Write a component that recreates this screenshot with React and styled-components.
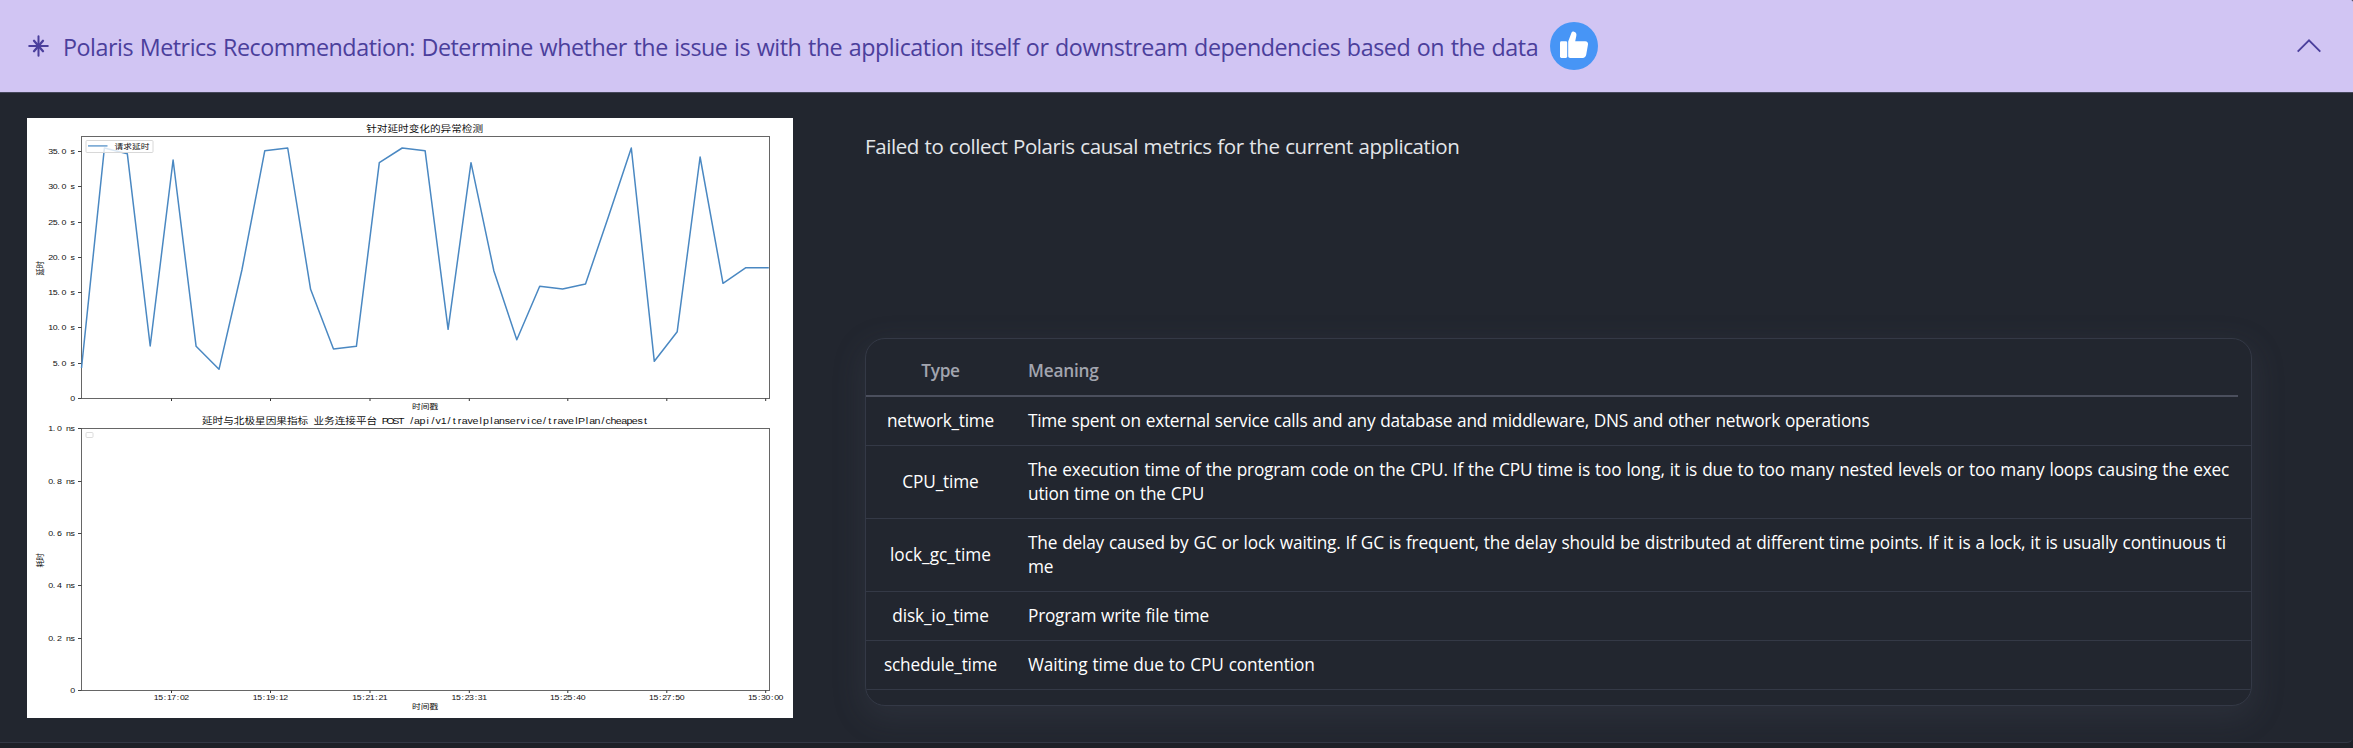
import React from 'react';
import styled, { createGlobalStyle } from 'styled-components';

const GlobalStyle = createGlobalStyle`
  *, *::before, *::after { box-sizing: border-box; }
  html, body { margin: 0; background: #1d2027; }
  body { font-family: "Open Sans", "Noto Sans", "Liberation Sans", sans-serif; overflow: hidden; }
`;

const Panel = styled.section`
  width: 100%;
  height: 743px;
  background: #22262f;
  border-bottom: 1px solid #323744;
  border-radius: 0 2px 6px 0;
  overflow: hidden;
`;

const PanelHeader = styled.header`
  display: flex;
  align-items: center;
  height: 93px;
  padding: 0 32px 0 28px;
  background: #d1c5f3;
  border-bottom: 1px solid #45475a;
  color: #4b3f9c;
`;

const HeaderTitle = styled.h1`
  margin: 2px 12px 0 14px;
  font-size: 23.3px;
  font-weight: 400;
  line-height: 36px;
  letter-spacing: -0.468px;
  word-spacing: 1px;
  white-space: nowrap;
`;

const LikeBadge = styled.span`
  display: flex;
  width: 48px;
  height: 48px;
  border-radius: 50%;
  background: #4795f6;
`;

const CollapseButton = styled.button`
  display: flex;
  margin-left: auto;
  padding: 0;
  border: 0;
  background: none;
  color: inherit;
`;

const PanelBody = styled.div`
  display: flex;
  align-items: flex-start;
  padding: 25px 101px 0 27px;
`;

const ChartFrame = styled.figure`
  flex: 0 0 766px;
  height: 600px;
  margin: 0;
  background: #fff;
`;

const ChartSvg = styled.svg`
  display: block;
`;

const ChartText = styled.text`
  font-family: "Liberation Sans", "Noto Sans CJK SC", sans-serif;
  fill: #111;
  text-anchor: middle;
`;

const Details = styled.div`
  flex: 1;
  margin-left: 72px;
`;

const Message = styled.p`
  height: 220px;
  margin: 0;
  padding-top: 12px;
  color: #e3e5e9;
  font-size: 20.5px;
  line-height: 32px;
  letter-spacing: -0.42px;
  word-spacing: 0.8px;
`;

const TableCard = styled.div`
  height: 368px;
  border: 1px solid #343946;
  border-radius: 20px;
  background: #22262f;
  box-shadow: 0 10px 30px 4px rgba(85, 88, 108, 0.18);
  overflow: hidden;
`;

const Row = styled.div`
  display: grid;
  grid-template-columns: 149px 1fr;
  align-items: center;
  padding: 12px 0;
  border-bottom: 1px solid #343946;
  color: #fff;
  font-size: 17.25px;
  line-height: 24px;
  word-spacing: 0.7px;
`;

const HeadRow = styled(Row)`
  height: 58px;
  margin-right: 13px;
  padding: 7px 0 0;
  border-bottom: 2px solid #4b4f5d;
  color: #a2a5af;
  font-weight: 600;
`;

const TypeCell = styled.div`
  text-align: center;
  letter-spacing: ${(p) => p.$spacing}px;
`;

const MeaningCell = styled.div`
  padding-left: 13px;
`;

const Line = styled.div`
  white-space: nowrap;
  letter-spacing: ${(p) => p.$spacing}px;
`;

const ROWS = [
  {
    type: 'network_time',
    spacing: -0.25,
    lines: [['Time spent on external service calls and any database and middleware, DNS and other network operations', -0.248]],
  },
  {
    type: 'CPU_time',
    spacing: -0.15,
    lines: [
      ['The execution time of the program code on the CPU. If the CPU time is too long, it is due to too many nested levels or too many loops causing the exec', -0.172],
      ['ution time on the CPU', -0.195],
    ],
  },
  {
    type: 'lock_gc_time',
    spacing: 0,
    lines: [
      ['The delay caused by GC or lock waiting. If GC is frequent, the delay should be distributed at different time points. If it is a lock, it is usually continuous ti', -0.193],
      ['me', -0.2],
    ],
  },
  { type: 'disk_io_time', spacing: -0.15, lines: [['Program write file time', -0.23]] },
  { type: 'schedule_time', spacing: -0.2, lines: [['Waiting time due to CPU contention', -0.118]] },
];

const STRETCH = 1.18;
const isWide = (ch) => ch.charCodeAt(0) > 0x2e7f;

// Fixed-pitch label: a CJK glyph takes one em, any other glyph half an em.
function GridText({ x, y, size, align = 'center', children, rotate }) {
  const chars = [...children];
  const total = chars.reduce((sum, ch) => sum + (isWide(ch) ? size : size / 2), 0);
  let cursor = align === 'end' ? -total : -total / 2;
  const xs = chars.map((ch) => {
    const w = isWide(ch) ? size : size / 2;
    const nudge = ch === '.' ? -size * 0.12 : 0;
    const at = cursor + w / 2 + nudge;
    cursor += w;
    return at.toFixed(2);
  });
  return (
    <ChartText
      x={xs.join(' ')}
      y={0}
      xmlSpace="preserve"
      fontSize={size}
      transform={`translate(${x} ${y}) scale(${STRETCH} 1)${rotate ? ' rotate(-90)' : ''}`}
    >
      {children}
    </ChartText>
  );
}

const LEFT = 81.5;
const RIGHT = 769.5;
const SERIES = [
  368, 148, 153.7, 346, 160, 346.3, 369.3, 270, 150.7, 148, 289.3, 349, 346.3, 162.7, 148, 150.7,
  329.3, 162.7, 271, 339.7, 286.3, 289, 284, 216.7, 148, 361.3, 331.7, 157, 283.3, 267.7, 267.7,
];
const TIME_TICKS = [
  [171.5, '15:17:02'],
  [270.5, '15:19:12'],
  [370, '15:21:21'],
  [469.3, '15:23:31'],
  [567.8, '15:25:40'],
  [666.8, '15:27:50'],
  [765.7, '15:30:00'],
];
const DELAY_TICKS = [
  [151.5, '35.0 s'],
  [186.5, '30.0 s'],
  [222.5, '25.0 s'],
  [257.5, '20.0 s'],
  [292.5, '15.0 s'],
  [327.5, '10.0 s'],
  [363.5, '5.0 s'],
  [398.5, '0'],
];
const COST_TICKS = [
  [428.5, '1.0 ns'],
  [481.5, '0.8 ns'],
  [533.5, '0.6 ns'],
  [585.5, '0.4 ns'],
  [638.5, '0.2 ns'],
  [690.5, '0'],
];

function Axes({ top, bottom, ticks }) {
  return (
    <g>
      <rect x={LEFT} y={top} width={RIGHT - LEFT} height={bottom - top} fill="none" stroke="#666" strokeWidth="1" />
      {ticks.map(([y, label]) => (
        <g key={label}>
          <line x1={LEFT - 3.5} x2={LEFT} y1={y} y2={y} stroke="#444" />
          <GridText x={75} y={y + 2.6} size={7.5} align="end">
            {label}
          </GridText>
        </g>
      ))}
      {TIME_TICKS.map(([x]) => (
        <line key={x} x1={x} x2={x} y1={bottom} y2={bottom + 2.5} stroke="#333" />
      ))}
    </g>
  );
}

function LatencyCharts() {
  const step = (RIGHT - 0.7 - LEFT) / (SERIES.length - 1);
  const points = SERIES.map((y, i) => `${(LEFT + i * step).toFixed(1)},${y}`).join(' ');
  return (
    <ChartSvg width="766" height="600" viewBox="27 118 766 600">
      <GridText x={424.6} y={132.2} size={9}>针对延时变化的异常检测</GridText>
      <Axes top={136.5} bottom={398.5} ticks={DELAY_TICKS} />
      <polyline points={points} fill="none" stroke="#4a88c2" strokeWidth="1.5" strokeLinejoin="round" />
      <rect x="86" y="140.5" width="67" height="12" rx="1" fill="#fff" fillOpacity="0.8" stroke="#d8d8d8" />
      <line x1="88" x2="107.5" y1="145.9" y2="145.9" stroke="#6ba0d0" strokeWidth="1.5" />
      <GridText x={132} y={148.8} size={7.4}>请求延时</GridText>
      <GridText x={43} y={268.2} size={7.2} rotate>延时</GridText>
      <GridText x={425.2} y={409.2} size={7.4}>时间戳</GridText>

      <GridText x={425} y={424} size={9}>
        延时与北极星因果指标 业务连接平台 POST /api/v1/travelplanservice/travelPlan/cheapest
      </GridText>
      <Axes top={428.5} bottom={690.5} ticks={COST_TICKS} />
      <rect x="86" y="432.5" width="7" height="5" rx="1" fill="#fff" stroke="#dcdcdc" />
      {TIME_TICKS.map(([x, label]) => (
        <GridText key={label} x={x} y={700} size={7.4}>
          {label}
        </GridText>
      ))}
      <GridText x={43} y={560.4} size={7.2} rotate>耗时</GridText>
      <GridText x={425.2} y={709.2} size={7.4}>时间戳</GridText>
    </ChartSvg>
  );
}

function SparkIcon() {
  return (
    <svg width="21" height="22" viewBox="0 0 21 22" fill="none" stroke="currentColor" strokeLinecap="round">
      <path d="M10.5 1.2v19.6M1.2 11h18.6" strokeWidth="2" />
      <path d="M6 5.8l9 10.4M15 5.8L6 16.2" strokeWidth="2.3" />
    </svg>
  );
}

function ThumbIcon() {
  return (
    <svg width="48" height="48" viewBox="0 0 48 48" fill="#fff">
      <rect x="10" y="19.3" width="7.2" height="16.6" rx="1.4" />
      <path d="M18.2 19.6 L21.2 11.5 C21.7 9.9 22.7 9.4 24 9.7 C26 10.2 26.8 12 26.3 14 L25.2 19.2 H35.2 C37.2 19.2 38.3 20.6 38 22.5 L36.2 32.8 C35.8 34.8 34.6 35.9 32.6 35.9 H20.2 C18.9 35.9 18.2 35.2 18.2 34 Z" />
    </svg>
  );
}

function ChevronUpIcon() {
  return (
    <svg width="24" height="14" viewBox="0 0 24 14" fill="none" stroke="currentColor" strokeWidth="1.9">
      <path d="M0.7 12.7L12 1.4L23.3 12.7" />
    </svg>
  );
}

export default function App() {
  return (
    <>
      <GlobalStyle />
      <Panel>
        <PanelHeader>
          <SparkIcon />
          <HeaderTitle>
            Polaris Metrics Recommendation: Determine whether the issue is with the application itself or downstream
            dependencies based on the data
          </HeaderTitle>
          <LikeBadge>
            <ThumbIcon />
          </LikeBadge>
          <CollapseButton aria-label="Collapse">
            <ChevronUpIcon />
          </CollapseButton>
        </PanelHeader>
        <PanelBody>
          <ChartFrame>
            <LatencyCharts />
          </ChartFrame>
          <Details>
            <Message>Failed to collect Polaris causal metrics for the current application</Message>
            <TableCard>
              <HeadRow>
                <TypeCell $spacing={-0.35}>Type</TypeCell>
                <MeaningCell>
                  <Line $spacing={-0.2}>Meaning</Line>
                </MeaningCell>
              </HeadRow>
              {ROWS.map((row) => (
                <Row key={row.type}>
                  <TypeCell $spacing={row.spacing}>{row.type}</TypeCell>
                  <MeaningCell>
                    {row.lines.map(([text, spacing]) => (
                      <Line key={text} $spacing={spacing}>
                        {text}
                      </Line>
                    ))}
                  </MeaningCell>
                </Row>
              ))}
            </TableCard>
          </Details>
        </PanelBody>
      </Panel>
    </>
  );
}
